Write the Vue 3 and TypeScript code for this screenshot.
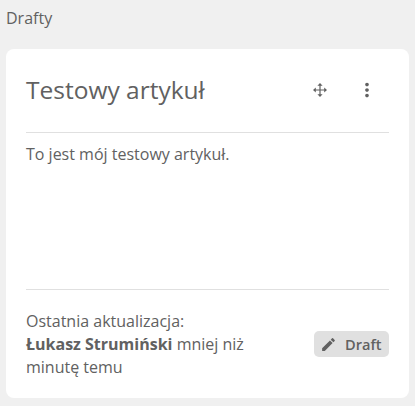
<script setup lang="ts">
const title = 'Testowy artykuł'
</script>

<template>
  <div class="page">
    <div class="heading">Drafty</div>
    <div class="card">
      <div class="head">
        <div class="title">{{ title }}</div>
        <div class="actions">
          <svg viewBox="0 0 14 14" width="14" height="14">
            <path fill="none" stroke="#616161" stroke-width="1.2" d="M7 2v10M2 7h10" />
            <path fill="#616161" d="M7 0l2.6 2.8H4.4zM7 14l2.6-2.8H4.4zM0 7l2.8-2.6v5.2zM14 7l-2.8-2.6v5.2z" />
          </svg>
          <svg viewBox="0 0 24 24" width="22" height="22"><path fill="#616161" d="M12 8c1.1 0 2-.9 2-2s-.9-2-2-2-2 .9-2 2 .9 2 2 2zm0 2c-1.1 0-2 .9-2 2s.9 2 2 2 2-.9 2-2-.9-2-2-2zm0 6c-1.1 0-2 .9-2 2s.9 2 2 2 2-.9 2-2-.9-2-2-2z"/></svg>
        </div>
      </div>
      <div class="body">To jest mój testowy artykuł.</div>
      <div class="foot">
        <div class="meta">Ostatnia aktualizacja:<br><b>Łukasz Strumiński</b> mniej niż minutę temu</div>
        <div class="chip">
          <svg viewBox="0 0 24 24" width="17" height="17"><path fill="#616161" d="M3 17.25V21h3.75L17.81 9.94l-3.75-3.75L3 17.25zM20.71 7.04c.39-.39.39-1.02 0-1.41l-2.34-2.34a.9959.9959 0 0 0-1.41 0l-1.83 1.83 3.75 3.75 1.83-1.83z"/></svg>
          <span>Draft</span>
        </div>
      </div>
    </div>
  </div>
</template>

<style>
html, body { margin: 0; background: #f0f0f0; }
</style>

<style scoped>
.page {
  width: 415px;
  height: 406px;
  box-sizing: border-box;
  padding: 0 6px;
  font-family: "Open Sans", sans-serif;
  color: #616161;
  overflow: hidden;
}
.heading {
  height: 37px;
  line-height: 37px;
  font-size: 16px;
}
.card {
  margin-top: 12px;
  width: 403px;
  height: 349px;
  background: #fff;
  border-radius: 8px;
  box-sizing: border-box;
  padding: 0 20px;
  display: flex;
  flex-direction: column;
}
.head {
  height: 84px;
  box-sizing: border-box;
  padding-bottom: 2px;
  display: flex;
  align-items: center;
  justify-content: space-between;
  border-bottom: 1px solid #e0e0e0;
}
.title { font-size: 24.5px; }
.actions { display: flex; align-items: center; gap: 29px; margin-right: 11px; }
.body {
  flex: 1;
  padding-top: 10px;
  font-size: 16px;
  line-height: 22px;
}
.foot {
  height: 109px;
  box-sizing: border-box;
  border-top: 1px solid #e0e0e0;
  padding-top: 20px;
  display: flex;
  justify-content: space-between;
  align-items: flex-start;
}
.meta { width: 240px; font-size: 16px; line-height: 23px; }
.chip {
  margin-top: 21px;
  display: flex;
  align-items: center;
  gap: 8px;
  width: 75px;
  box-sizing: border-box;
  height: 26px;
  padding: 0 0 0 6px;
  background: #e0e0e0;
  border-radius: 5px;
  font-size: 14.6px;
  font-weight: 600;
  white-space: nowrap;
}
</style>
